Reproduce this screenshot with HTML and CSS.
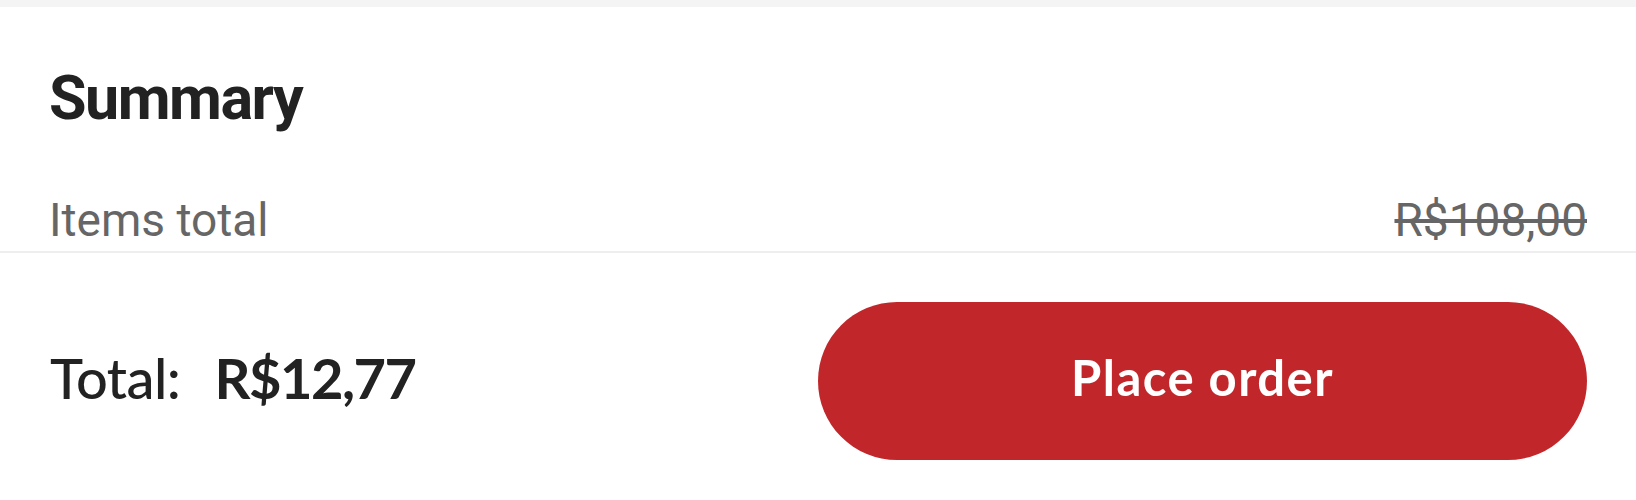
FILE: index.html
```html
<!DOCTYPE html>
<html lang="en">
<head>
    <meta charset="UTF-8">
    <meta name="viewport" content="width=device-width, initial-scale=1.0">
    <title>Checkout summary</title>
    <link rel="stylesheet" href="styles.css">
</head>
<body>
    <div class="topbar"></div>
    <section class="summary">
        <h2>Summary</h2>
        <div class="row">
            <span class="label">Items total</span>
            <span class="old-price">R$108,00</span>
        </div>
    </section>
    <footer class="checkout">
        <div class="total">
            <span class="total-label">Total:</span>
            <span class="total-value">R$12,77</span>
        </div>
        <button type="button" class="place-order">Place order</button>
    </footer>
</body>
</html>
```

FILE: styles.css
```css
body {
    margin: 0;
    padding: 0;
    background-color: #fff;
    font-family: Roboto, "Liberation Sans", sans-serif;
    color: #222;
}
.topbar {
    height: 7px;
    background-color: #f4f4f4;
}
.summary {
    padding: 0 49px;
    border-bottom: 2px solid #eeeeee;
}
.summary h2 {
    margin: 61px 0 0;
    font-size: 61px;
    line-height: 61px;
    font-weight: 700;
    letter-spacing: -1.5px;
    color: #222;
}
.row {
    display: flex;
    justify-content: space-between;
    align-items: baseline;
    margin-top: 68px;
    padding-bottom: 8px;
    font-size: 46px;
    line-height: 46px;
    color: #666;
}
.old-price {
    text-decoration: line-through;
}
.checkout {
    display: flex;
    justify-content: space-between;
    align-items: center;
    padding: 49px 49px 40px 50px;
}
.total {
    display: flex;
    align-items: baseline;
    margin-bottom: 7px;
    font-family: Lato, "Open Sans", sans-serif;
    font-size: 56px;
    color: #222;
}
.total-label {
    font-weight: 500;
    letter-spacing: -0.5px;
}
.total-value {
    margin-left: 34px;
    font-weight: 700;
    letter-spacing: -1.5px;
}
.place-order {
    width: 769px;
    height: 158px;
    padding: 0 0 8px;
    border: none;
    border-radius: 79px;
    background-color: #c1272a;
    color: #fff;
    font-family: Lato, "Open Sans", sans-serif;
    font-size: 49px;
    font-weight: 700;
    letter-spacing: 1.5px;
    cursor: pointer;
}
```
